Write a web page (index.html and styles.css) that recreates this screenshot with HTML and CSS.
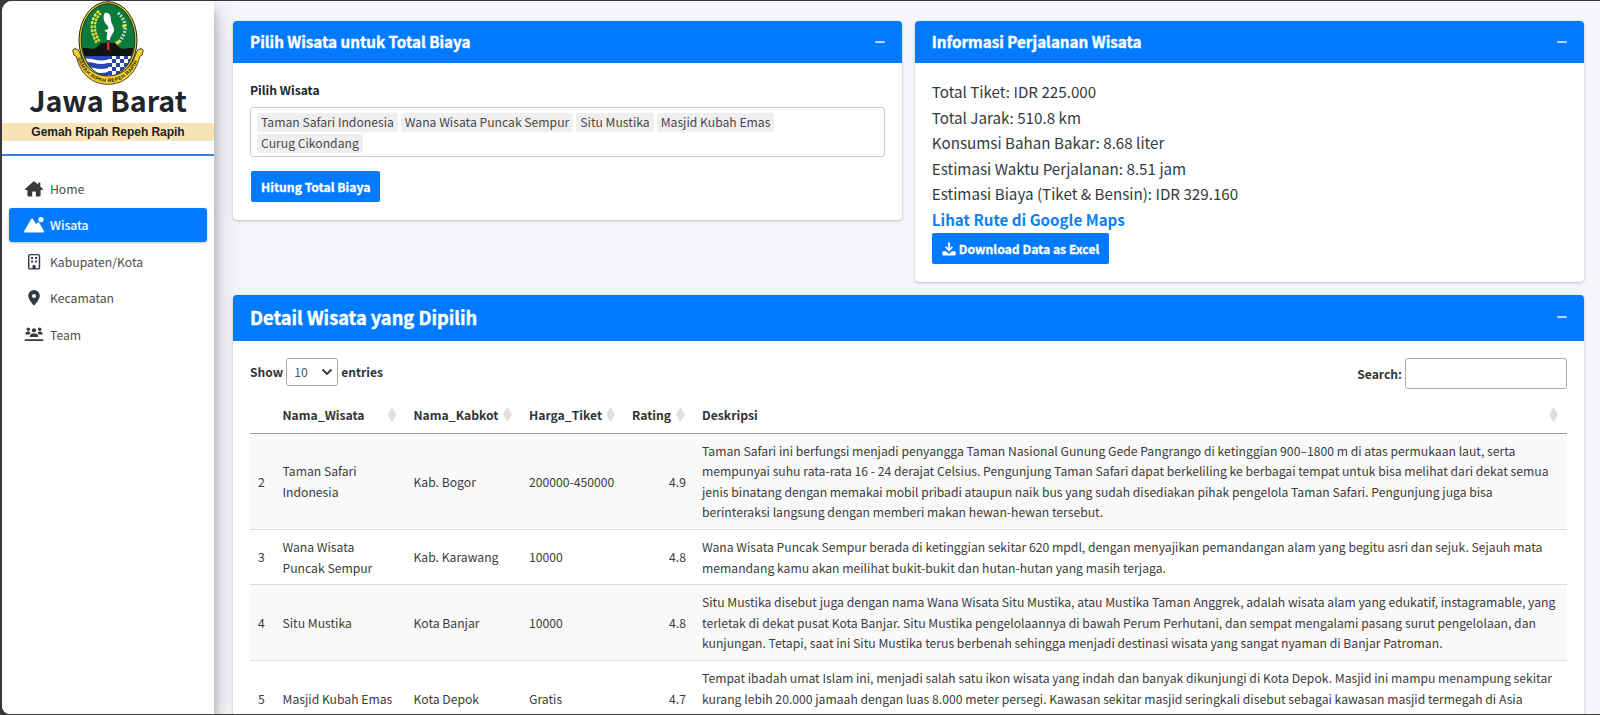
FILE: index.html
```html
<!DOCTYPE html>
<html lang="id">
<head>
<meta charset="utf-8">
<title>Jawa Barat</title>
<link rel="stylesheet" href="styles.css">
</head>
<body>
<div class="window">
  <aside class="sidebar">
    <div class="brand">
      <svg class="emblem" viewBox="0 0 72 84">
        <defs>
          <clipPath id="shield"><ellipse cx="36" cy="39" rx="26" ry="36"/></clipPath>
          <pattern id="checks" width="8" height="8" patternUnits="userSpaceOnUse" x="36" y="54">
            <rect width="8" height="8" fill="#fff"/><rect width="4" height="4" fill="#2743b5"/><rect x="4" y="4" width="4" height="4" fill="#2743b5"/>
          </pattern>
          <path id="motto" d="M4.500 54C10 74 24 81.200 36 81.200S62 74 67.500 54"/>
        </defs>
        <ellipse cx="36" cy="39" rx="29" ry="38.300" fill="#d9c92f" stroke="#222" stroke-width="1"/>
        <ellipse cx="36" cy="39" rx="26.800" ry="36.300" fill="#0c7a3d" stroke="#111" stroke-width=".8"/>
        <g clip-path="url(#shield)">
          <rect x="8" y="54" width="28" height="26" fill="#2743b5"/>
          <path d="M8 58.500q7-2 14 0t14 0v3.500q-7 2-14 0t-14 0zM8 67q7-2 14 0t14 0v4q-7 2-14 0t-14 0z" fill="#fff"/>
          <rect x="36" y="54" width="28" height="26" fill="url(#checks)"/>
          <path d="M8 47h8l4 1 4-1 5-5h5l2-2 3 2h4l5 5 4 1 4-1h8v8H8z" fill="#101512"/>
          <path d="M35 41h2.500v8H35z" fill="#e22b20"/>
          <path d="M33 12c5-1 6 4 6 8 0 3 3 5 3 8 0 5-4 6-4 11h-3c-1-4 1-6 0-8-2 0-2-1-2-2 5 0 4-3 1-6-3-4-3-9-1-11z" fill="#fff"/>
          <path d="M28 11C20 18 19 29 26 41" fill="none" stroke="#e8de35" stroke-width="5.500" stroke-dasharray="2.800 1"/>
          <path d="M28 11C20 18 19 29 26 41" fill="none" stroke="#0c7a3d" stroke-width=".8"/>
          <path d="M46 12c9 8 10 18 1 29" fill="none" stroke="#cfe3bb" stroke-width="3.200" stroke-dasharray="1.800 1.600"/>
          <path d="M43 41l4-2 1 3-3 2zM50 24l3-1 1 3-3 1z" fill="#e8de35"/>
        </g>
        <path d="M.8 49l2-1.500 3.700 1.500 2.500 6C14 69 25 75 36 75s22-6 27-20l2.500-6 3.700-1.500 2 1.500-1 5-2.500 1.500C63 76 49 83.300 36 83.300S9 76 4.300 55.500L1.800 54z" fill="#f2d233" stroke="#3b3208" stroke-width=".9"/>
        <text class="emblem-text"><textPath href="#motto" startOffset="3" textLength="80">GEMAH RIPAH REPEH RAPIH</textPath></text>
      </svg>
      <h1 class="brand-name">Jawa Barat</h1>
      <div class="brand-motto">Gemah Ripah Repeh Rapih</div>
    </div>
    <nav class="menu">
      <a class="menu-item"><svg class="menu-icon" viewBox="0 0 20 18"><path d="M10.600 1.400a.9.900 0 0 0-1.200 0L1.300 8.700a.8.800 0 0 0 .5 1.400H3.400V15a1.500 1.500 0 0 0 1.500 1.500H8.200V12.200a.7.700 0 0 1 .7-.7h2.200a.7.700 0 0 1 .7.700v4.300h3.300A1.500 1.500 0 0 0 16.600 15V10.100h1.600a.8.800 0 0 0 .5-1.400L16.300 6.500V3a.6.600 0 0 0-.6-.6h-1a.6.600 0 0 0-.6.600v1.600z"/></svg><span>Home</span></a>
      <a class="menu-item active"><svg class="menu-icon" viewBox="0 0 20 18"><path d="M7 3.200a1.200 1.200 0 0 1 2 0l3.200 5 1.300-1.700a1 1 0 0 1 1.600 0l4.600 8.200a1.200 1.200 0 0 1-1 1.900H1.300a1.200 1.200 0 0 1-1-1.900z"/><circle cx="17" cy="3.600" r="2.600"/></svg><span>Wisata</span></a>
      <a class="menu-item"><svg class="menu-icon" viewBox="0 0 20 18"><rect x="4.700" y="1.600" width="10.800" height="14.300" rx="1.500" fill="none" stroke="currentColor" stroke-width="1.400"/><path d="M7.100 4h2v2h-2zM11.100 4h2v2h-2zM7.100 7.500h2v2h-2zM11.100 7.500h2v2h-2zM8.500 16v-2.600a1.600 1.600 0 0 1 3.200 0V16z"/></svg><span>Kabupaten/Kota</span></a>
      <a class="menu-item"><svg class="menu-icon" viewBox="0 0 20 18"><path fill-rule="evenodd" d="M10 1a5.800 5.800 0 0 1 5.800 5.800c0 3-3.800 7.600-5.100 9.200a.9.900 0 0 1-1.400 0C8 14.400 4.200 9.800 4.200 6.800A5.800 5.800 0 0 1 10 1zm0 3.900a2 2 0 1 0 0 4 2 2 0 0 0 0-4z"/></svg><span>Kecamatan</span></a>
      <a class="menu-item"><svg class="menu-icon" viewBox="0 0 20 18"><circle cx="4.300" cy="3.200" r="1.700"/><circle cx="15.700" cy="3.200" r="1.700"/><circle cx="10" cy="4.300" r="2.100"/><path d="M1.300 8.400c0-1.800 1-2.900 2.700-2.900 1.200 0 1.800.4 2.500 1.200L5.400 8.400zM18.700 8.400c0-1.800-1-2.900-2.700-2.900-1.200 0-1.800.4-2.500 1.200l1.100 1.700zM5.700 11c0-2.400 1.500-3.500 3-3.500h2.600c1.500 0 3 1.100 3 3.500z"/><rect x=".5" y="13.200" width="19" height="1.900" rx=".9"/></svg><span>Team</span></a>
    </nav>
  </aside>
  <main class="content">
    <div class="row">
      <section class="card">
        <header class="card-header"><h2>Pilih Wisata untuk Total Biaya</h2><span class="collapse"></span></header>
        <div class="card-body form-body">
          <label class="field-label">Pilih Wisata</label>
          <div class="tags"><span class="tag">Taman Safari Indonesia</span><span class="tag">Wana Wisata Puncak Sempur</span><span class="tag">Situ Mustika</span><span class="tag">Masjid Kubah Emas</span><span class="tag">Curug Cikondang</span></div>
          <button class="btn">Hitung Total Biaya</button>
        </div>
      </section>
      <section class="card">
        <header class="card-header"><h2>Informasi Perjalanan Wisata</h2><span class="collapse"></span></header>
        <div class="card-body info-body">
          <p>Total Tiket: IDR 225.000</p>
          <p>Total Jarak: 510.8 km</p>
          <p>Konsumsi Bahan Bakar: 8.68 liter</p>
          <p>Estimasi Waktu Perjalanan: 8.51 jam</p>
          <p>Estimasi Biaya (Tiket &amp; Bensin): IDR 329.160</p>
          <p><a class="route-link">Lihat Rute di Google Maps</a></p>
          <button class="btn"><svg class="btn-icon" viewBox="0 0 14 14"><path d="M6.100.5h1.800v5.700l1.900-1.900 1.200 1.200L7 9.500 3 5.500l1.200-1.200 1.900 1.900zM1.500 9.300h2.600L7 12l2.900-2.700h2.600A1.300 1.300 0 0 1 13.800 10.600v1.600a1.300 1.300 0 0 1-1.300 1.300h-11A1.300 1.300 0 0 1 .2 12.200v-1.600a1.300 1.300 0 0 1 1.300-1.300z"/></svg>Download Data as Excel</button>
        </div>
      </section>
    </div>
    <section class="card detail">
      <header class="card-header large"><h2>Detail Wisata yang Dipilih</h2><span class="collapse"></span></header>
      <div class="card-body table-body">
        <div class="controls">
          <label class="length">Show <span class="select">10<svg viewBox="0 0 12 8"><path d="M1.500 1.500 6 6l4.500-4.500"/></svg></span> entries</label>
          <label class="search">Search: <input type="text"></label>
        </div>
        <table class="grid">
          <colgroup><col class="c1"><col class="c2"><col class="c3"><col class="c4"><col class="c5"><col></colgroup>
          <thead><tr><th></th>
            <th><div class="th">Nama_Wisata<i class="sort"></i></div></th><th><div class="th">Nama_Kabkot<i class="sort"></i></div></th><th><div class="th">Harga_Tiket<i class="sort"></i></div></th><th><div class="th">Rating<i class="sort"></i></div></th><th><div class="th">Deskripsi<i class="sort"></i></div></th></tr></thead>
          <tbody>
            <tr><td>2</td><td>Taman Safari<br>Indonesia</td><td>Kab. Bogor</td><td>200000-450000</td><td class="num">4.9</td><td>Taman Safari ini berfungsi menjadi penyangga Taman Nasional Gunung Gede Pangrango di ketinggian 900–1800 m di atas permukaan laut, serta<br>mempunyai suhu rata-rata 16 - 24 derajat Celsius. Pengunjung Taman Safari dapat berkeliling ke berbagai tempat untuk bisa melihat dari dekat semua<br>jenis binatang dengan memakai mobil pribadi ataupun naik bus yang sudah disediakan pihak pengelola Taman Safari. Pengunjung juga bisa<br>berinteraksi langsung dengan memberi makan hewan-hewan tersebut.</td></tr>
            <tr><td>3</td><td>Wana Wisata<br>Puncak Sempur</td><td>Kab. Karawang</td><td>10000</td><td class="num">4.8</td><td>Wana Wisata Puncak Sempur berada di ketinggian sekitar 620 mpdl, dengan menyajikan pemandangan alam yang begitu asri dan sejuk. Sejauh mata<br>memandang kamu akan meilihat bukit-bukit dan hutan-hutan yang masih terjaga.</td></tr>
            <tr><td>4</td><td>Situ Mustika</td><td>Kota Banjar</td><td>10000</td><td class="num">4.8</td><td>Situ Mustika disebut juga dengan nama Wana Wisata Situ Mustika, atau Mustika Taman Anggrek, adalah wisata alam yang edukatif, instagramable, yang<br>terletak di dekat pusat Kota Banjar. Situ Mustika pengelolaannya di bawah Perum Perhutani, dan sempat mengalami pasang surut pengelolaan, dan<br>kunjungan. Tetapi, saat ini Situ Mustika terus berbenah sehingga menjadi destinasi wisata yang sangat nyaman di Banjar Patroman.</td></tr>
            <tr class="last"><td>5</td><td>Masjid Kubah Emas</td><td>Kota Depok</td><td>Gratis</td><td class="num">4.7</td><td>Tempat ibadah umat Islam ini, menjadi salah satu ikon wisata yang indah dan banyak dikunjungi di Kota Depok. Masjid ini mampu menampung sekitar<br>kurang lebih 20.000 jamaah dengan luas 8.000 meter persegi. Kawasan sekitar masjid seringkali disebut sebagai kawasan masjid termegah di Asia<br>&nbsp;</td></tr>
          </tbody>
        </table>
      </div>
    </section>
  </main>
</div>
</body>
</html>
```
FILE: styles.css
```css
* { box-sizing: border-box; }
body {
  margin: 0;
  height: 715px;
  overflow: hidden;
  background: #38383a;
  padding: 1px 0 1px 2px;
  font-family: "Noto Sans CJK SC", "Noto Sans", sans-serif;
  font-size: 12px;
  color: #333;
}
h1, h2, p { margin: 0; }
.window {
  display: flex;
  height: 713px;
  overflow: hidden;
  border-radius: 10px 0 0 8px;
  background: #f4f6f9;
}
.sidebar {
  width: 212px;
  flex: none;
  background: #fff;
  box-shadow: 0 12px 24px rgba(0,0,0,.25), 0 9px 9px rgba(0,0,0,.2);
}
.brand {
  display: flex;
  flex-direction: column;
  align-items: center;
  height: 155px;
  border-bottom: 2px solid #3483dc;
}
.emblem { width: 72px; height: 84px; }
.emblem-text { font: bold 5.200px "Liberation Sans", sans-serif; fill: #2b2608; }
.brand-name { font-size: 28.700px; font-weight: 700; line-height: 30px; height: 38px; color: #212529; }
.brand-motto {
  width: 100%;
  height: 18px;
  background: #f9e4b7;
  text-align: center;
  font: bold 12px/18px "Liberation Sans", Arial, sans-serif;
  letter-spacing: -.03px;
  color: #222;
}
.menu { display: flex; flex-direction: column; gap: 2.500px; padding: 15.500px 7px; }
.menu-item {
  display: flex;
  align-items: center;
  gap: 6px;
  height: 34px;
  padding-left: 15px;
  border-radius: 3px;
  font-size: 12.200px;
  color: #4a4e53;
}
.menu-item.active { background: #007bff; color: #fff; font-weight: 500; box-shadow: 0 1px 3px rgba(0,0,0,.25); }
.menu-icon { width: 20px; height: 18px; fill: currentColor; color: #343a40; }
.menu-item span { line-height: 18px; }
.menu-item.active span { padding-bottom: 1px; }
.active .menu-icon { color: #fff; }
.content { flex: 1; padding: 20px 16px 0 19px; }
.row { display: grid; grid-template-columns: 1fr 1fr; gap: 12.500px; align-items: start; }
.card { background: #fff; border-radius: 4px; box-shadow: 0 0 1px rgba(0,0,0,.15), 0 1px 3px rgba(0,0,0,.22); }
.card-header {
  display: flex;
  align-items: center;
  justify-content: space-between;
  height: 42px;
  padding: 0 17px;
  background: #007bff;
  border-radius: 4px 4px 0 0;
  color: #fff;
}
.card-header h2 { font-size: 15.200px; line-height: 20px; padding-bottom: 2px; font-weight: 700; -webkit-text-stroke: .4px #fff; }
.card-header.large { height: 46px; padding-bottom: 2.500px; }
.card-header.large h2 { font-size: 18.250px; line-height: 26px; padding-bottom: 0; }
.collapse { width: 10px; height: 2px; background: #b5d8ff; border-radius: 1px; }
.card-body { padding: 17px; }
.form-body { height: 157px; }
.field-label { display: block; height: 27px; font-size: 12.150px; line-height: 20px; font-weight: 700; color: #212529; }
.tags {
  display: flex;
  flex-wrap: wrap;
  align-content: flex-start;
  gap: 2px 3px;
  height: 50px;
  padding: 4.500px 96px 0 6px;
  border: 1px solid #ccc;
  border-radius: 3px;
}
.tag { height: 19px; padding: 0 4px; background: #efefef; border-radius: 3px; font-size: 12.180px; line-height: 19.500px; color: #484848; white-space: nowrap; }
.btn {
  display: flex;
  align-items: center;
  gap: 3px;
  height: 31px;
  margin: 14px 0 0 1px;
  padding: 0 10px;
  border: 0;
  border-radius: 2px;
  background: #007bff;
  color: #fff;
  font: bold 12.200px "Noto Sans CJK SC", "Noto Sans", sans-serif;
  -webkit-text-stroke: .3px #fff;
  white-space: nowrap;
}
.info-body { height: 219px; }
.info-body p { height: 25.500px; line-height: 23.800px; font-size: 15.200px; color: #343a40; }
.info-body .btn { margin: 0; }
.btn-icon { width: 14px; height: 14px; fill: #fff; }
.info-body .route-link { color: #0d7ff2; font-weight: 700; }
.detail { margin-top: 13px; height: 500px; }
.controls { display: flex; justify-content: space-between; align-items: flex-start; font-size: 12.100px; font-weight: 700; color: #333; height: 39px; }
.table-body { padding-top: 16.500px; }
.length, .search { display: flex; align-items: center; gap: 3px; }
.length { height: 28px; }
.select { display: flex; align-items: center; justify-content: space-between; width: 52px; height: 28px; padding: 0 4px 0 7px; border: 1px solid #aaa; border-radius: 3px; font-weight: 400; color: #555; }
.select svg { width: 12px; height: 8px; fill: none; stroke: #333; stroke-width: 1.800; }
.search input { width: 162px; height: 31px; border: 1px solid #aaa; border-radius: 3px; }
.grid { width: 100%; table-layout: fixed; border-collapse: separate; border-spacing: 0; margin-top: -8px; }
.c1 { width: 24.500px; } .c2 { width: 131px; } .c3 { width: 115.500px; } .c4 { width: 103px; } .c5 { width: 70px; }
.grid th { height: 45px; padding: 0 8px 8px; border-bottom: 1px solid #999; text-align: left; vertical-align: bottom; font-size: 12.180px; font-weight: 700; }
.th { display: flex; justify-content: space-between; align-items: center; line-height: 20px; margin-right: 1px; }
.sort { width: 9px; height: 15px; background: #e0e0e0; clip-path: polygon(50% 0, 100% 50%, 50% 100%, 0 50%); }
.grid td { padding: 7.500px 8px 6px; border-bottom: 1px solid #ddd; font-size: 12.180px; line-height: 20.400px; vertical-align: middle; white-space: nowrap; color: #3c3c3c; }
.grid tbody tr:nth-child(odd) { background: #f9f9f9; }
.grid tbody tr.last, .grid tbody tr:nth-child(even) { background: #fff; }
.grid .num { text-align: right; }
```
